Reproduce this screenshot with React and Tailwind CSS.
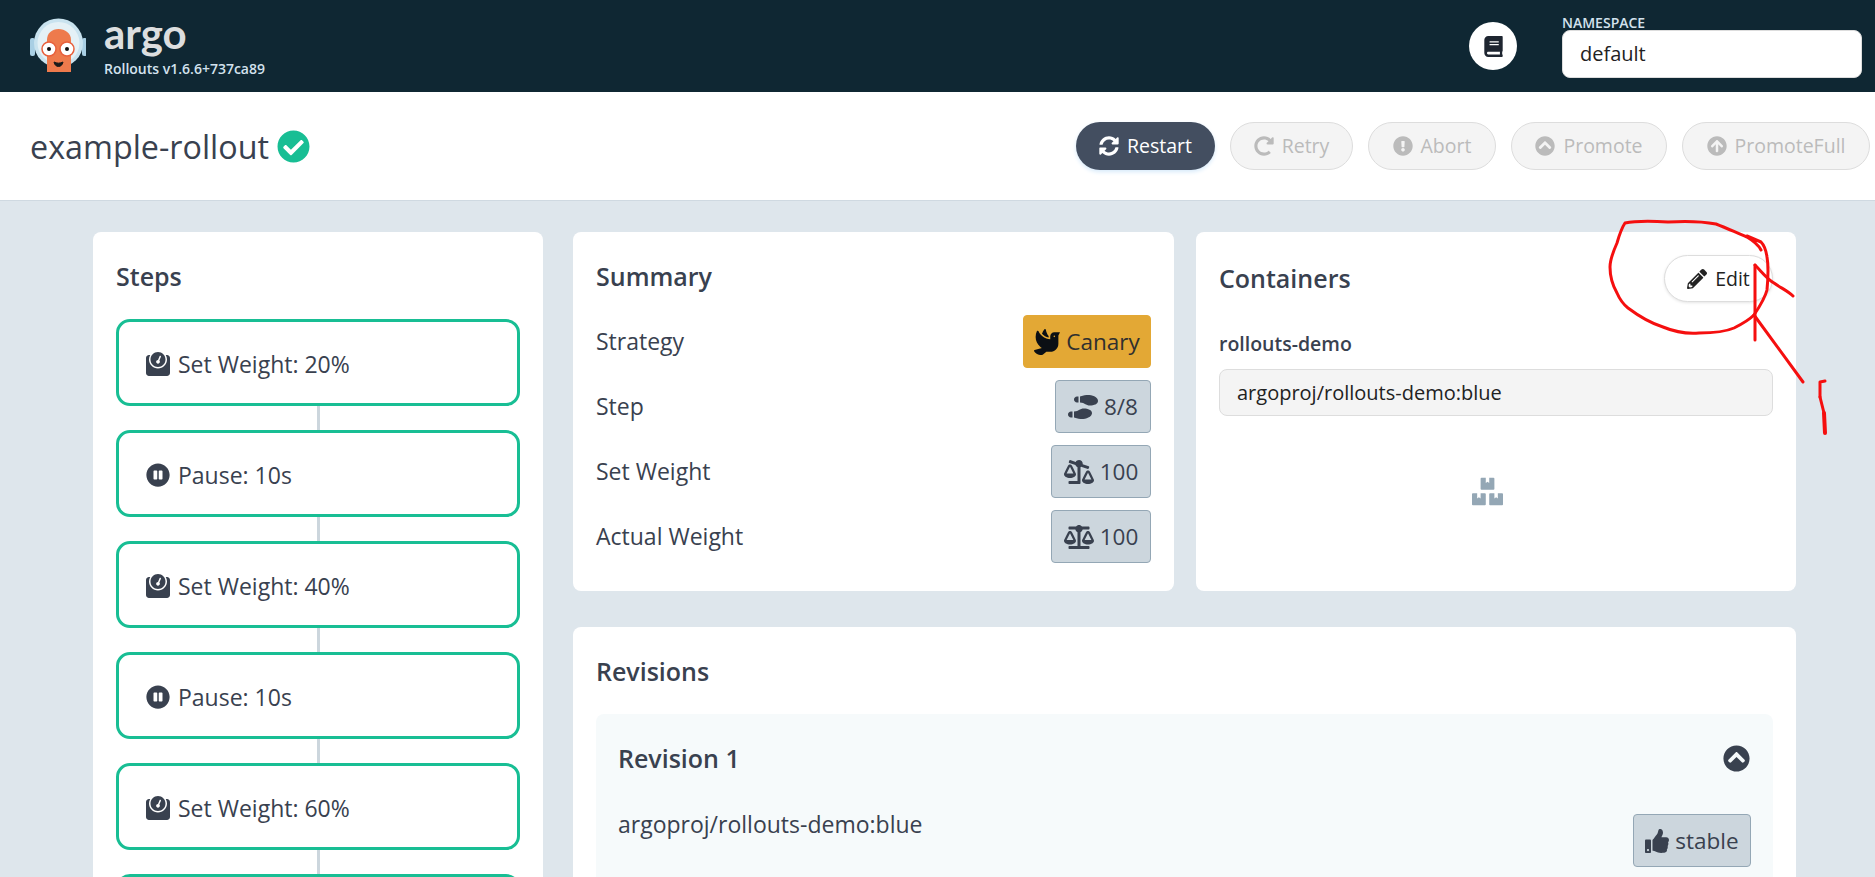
import React from 'react'
import {
  FaBook, FaSyncAlt, FaRedoAlt, FaExclamationCircle, FaChevronCircleUp, FaArrowCircleUp,
  FaCheckCircle, FaPencilAlt, FaDove, FaShoePrints, FaBalanceScale, FaBalanceScaleRight,
  FaWeight, FaPauseCircle, FaThumbsUp, FaBoxes,
} from 'react-icons/fa'

const font = { fontFamily: '"Open Sans", sans-serif' }

const steps = [
  { icon: FaWeight, text: 'Set Weight: 20%' },
  { icon: FaPauseCircle, text: 'Pause: 10s' },
  { icon: FaWeight, text: 'Set Weight: 40%' },
  { icon: FaPauseCircle, text: 'Pause: 10s' },
  { icon: FaWeight, text: 'Set Weight: 60%' },
  {},
]

const disabledActions = [
  { icon: FaRedoAlt, label: 'Retry', w: 'w-[123px]' },
  { icon: FaExclamationCircle, label: 'Abort', w: 'w-[128px]' },
  { icon: FaChevronCircleUp, label: 'Promote', w: 'w-[156px]' },
  { icon: FaArrowCircleUp, label: 'PromoteFull', w: 'w-[188px]' },
]

const summary = [
  { label: 'Strategy', icon: FaDove, value: 'Canary', canary: true, size: 'text-[26px]', w: 'w-[128px]' },
  { label: 'Step', icon: FaShoePrints, value: '8/8', size: 'text-[30px]', w: 'w-[96px]' },
  { label: 'Set Weight', icon: FaBalanceScaleRight, value: '100', size: 'text-[30px]', w: 'w-[100px]' },
  { label: 'Actual Weight', icon: FaBalanceScale, value: '100', size: 'text-[30px]', w: 'w-[100px]' },
]

function Badge({ icon: Icon, children, canary, size, w }) {
  return (
    <div className={`flex h-[53px] items-center justify-center gap-[6px] rounded border text-[22.5px] ${w} ${canary ? 'border-[#e3a835] bg-[#e3a835] text-[#2f2f2f]' : 'border-[#94a7b5] bg-[#ccd6dd] text-[#39414f]'}`}>
      <Icon className={`${size} ${canary ? 'text-[#0b0f14]' : 'text-[#39414f]'}`} />
      <span>{children}</span>
    </div>
  )
}

// red pen marks drawn over the page
function Annotation() {
  return (
    <svg className="pointer-events-none absolute left-0 top-0" width="1875" height="877" fill="none" stroke="#f50f0f" strokeWidth="3" strokeLinecap="round" strokeLinejoin="round">
      <path d="M1761 250 C1758 244 1752 240 1747 237 C1735 232 1726 228 1716 224 C1700 221 1685 221 1668 222 C1650 221 1635 221 1625 223 C1621 229 1619 236 1617 243 C1613 252 1610 259 1610 267 C1610 277 1613 286 1617 293 C1620 300 1623 304 1628 308 C1640 317 1650 323 1663 327 C1675 332 1687 334 1699 333 C1713 333 1725 332 1734 328 C1742 324 1749 320 1754 315 C1760 306 1765 298 1767 290 C1768 279 1769 268 1767 257 C1766 250 1764 245 1761 242 L1747 236" />
      <path d="M1755 265 L1755 340" />
      <path d="M1755 265 C1762 272 1767 279 1774 283 C1781 288 1788 291 1793 296" />
      <path d="M1754 315 L1803 382" />
      <path d="M1825 381 L1820 382 L1820 397" />
      <path d="M1824 413 L1825 433" strokeWidth="4" />
      <path d="M1820 397 L1824 413" />
    </svg>
  )
}

function Logo() {
  return (
    <svg width="56" height="56" viewBox="0 0 56 56" className="shrink-0">
      <rect x="0" y="20" width="5" height="18" rx="2" fill="#a9cfe4" />
      <rect x="52" y="20" width="5" height="18" rx="2" fill="#a9cfe4" />
      <circle cx="28.5" cy="25" r="24.5" fill="#c9e3ef" />
      <circle cx="28.5" cy="25" r="21" fill="#e4f1f6" />
      <path d="M17 54V22c0-7 5-11 11.500-11S41 15 41 22v32z" fill="#ee7a4c" />
      <circle cx="19" cy="31" r="7" fill="#fff" stroke="#e8603c" strokeWidth="1.500" />
      <circle cx="37" cy="31" r="7" fill="#fff" stroke="#e8603c" strokeWidth="1.500" />
      <circle cx="19" cy="31" r="2" fill="#111" />
      <circle cx="37" cy="31" r="2" fill="#111" />
      <path d="M24 44c3 1.500 6 1.500 9 0c-1 6-8 6-9 0z" fill="#1a1a1a" stroke="#1a1a1a" strokeLinejoin="round" />
    </svg>
  )
}

export default function App() {
  return (
    <div className="relative h-[877px] overflow-hidden bg-[#dee6ec] text-[#39414f]" style={font}>
      <header className="flex h-[92px] items-center bg-[#0f2733] pl-[30px] pr-[13px]">
        <Logo />
        <div className="ml-[18px] flex flex-col">
          <span className="h-[45px] text-[42px] font-bold leading-[36px] text-[#dcdedf]" style={{ fontFamily: 'Lato, sans-serif' }}>argo</span>
          <span className="text-[14px] font-semibold leading-[18px] text-[#d3e2ee]">Rollouts v1.6.6+737ca89</span>
        </div>
        <button className="ml-auto flex h-[48px] w-[48px] items-center justify-center rounded-full bg-white text-[#1e2530]">
          <FaBook className="text-[21px]" />
        </button>
        <div className="ml-[45px] flex w-[300px] flex-col">
          <span className="text-[14px] font-semibold leading-[15px] text-[#d3e2ee]">NAMESPACE</span>
          <input readOnly value="default" className="h-[48px] rounded-lg border border-[#dddddd] bg-white px-[17px] text-[20px] text-[#222222] outline-none" />
        </div>
      </header>

      <div className="flex h-[109px] items-center border-b border-[#cfd9e1] bg-white pl-[30px] pr-[5px]">
        <h1 className="text-[32.300px] leading-none text-[#39414f]">example-rollout</h1>
        <FaCheckCircle className="ml-[8px] text-[33px] text-[#18be94]" />
        <div className="ml-auto flex items-center gap-[15px]">
          <button className="flex h-[48px] w-[139px] items-center justify-center gap-[8px] rounded-[24px] bg-[#434e60] text-[19.5px] text-white shadow-[0_2px_4px_#d7eafa]">
            <FaSyncAlt className="text-[20px]" />
            Restart
          </button>
          {disabledActions.map((a) => (
            <button key={a.label} className={`flex h-[48px] items-center justify-center gap-[8px] rounded-[24px] border border-[#dddddd] bg-[#f4f4f4] text-[19.5px] text-[#bbbbbb] ${a.w}`}>
              <a.icon className="text-[20px]" />
              {a.label}
            </button>
          ))}
        </div>
      </div>

      <main className="flex gap-[30px] pl-[93px] pr-[79px] pt-[31px]">
        <section className="h-[900px] w-[450px] shrink-0 rounded-lg bg-white px-[23px] pt-[22px]">
          <h2 className="mb-[21px] text-[25px] font-semibold leading-[44px]">Steps</h2>
          <div className="flex flex-col">
            {steps.map((s, i) => (
              <div key={i} className="flex flex-col items-center">
                <div className="flex h-[87px] w-full items-center gap-[8px] rounded-[14px] border-[3px] border-[#18be94] pl-[27px] pt-[3px] text-[23px]">
                  {s.icon && <s.icon className="text-[24px]" />}
                  {s.text && <span>{s.text}</span>}
                </div>
                <div className="h-[24px] w-[3px] bg-[#ccd6dd]" />
              </div>
            ))}
          </div>
        </section>

        <div className="flex min-w-0 flex-1 flex-col gap-[36px]">
          <div className="flex gap-[22px]">
            <section className="h-[359px] w-[601px] rounded-lg bg-white px-[23px] pt-[22px]">
              <h2 className="mb-[17px] text-[25px] font-semibold leading-[44px]">Summary</h2>
              <div className="flex flex-col gap-[12px]">
                {summary.map((r) => (
                  <div key={r.label} className="flex items-center justify-between">
                    <span className="text-[23px]">{r.label}</span>
                    <Badge icon={r.icon} canary={r.canary} size={r.size} w={r.w}>{r.value}</Badge>
                  </div>
                ))}
              </div>
            </section>

            <section className="flex h-[359px] flex-1 flex-col rounded-lg bg-white px-[23px] pt-[23px]">
              <div className="flex items-center justify-between">
                <h2 className="text-[25px] font-semibold leading-[47px]">Containers</h2>
                <button className="flex h-[47px] w-[109px] items-center justify-center gap-[8px] rounded-[24px] border border-[#dddddd] bg-white text-[19.5px] text-[#222222] shadow-[0_1px_3px_#e5e5e5]">
                  <FaPencilAlt className="text-[20px]" />
                  Edit
                </button>
              </div>
              <div className="mt-[29px] text-[19.5px] font-semibold leading-[26px]">rollouts-demo</div>
              <input readOnly value="argoproj/rollouts-demo:blue" className="mt-[12px] h-[47px] w-full rounded-lg border border-[#dddddd] bg-[#f4f4f4] px-[17px] text-[20px] text-[#222222] outline-none" />
              <FaBoxes className="ml-[253px] mt-[60px] text-[31px] text-[#94a7b5]" />
            </section>
          </div>

          <section className="h-[400px] rounded-lg bg-white px-[23px] pt-[22px]">
            <h2 className="mb-[21px] text-[25px] font-semibold leading-[44px]">Revisions</h2>
            <div className="h-[300px] rounded-lg bg-[#f6fafb] px-[22px] pt-[28px]">
              <div className="flex items-center justify-between">
                <h3 className="text-[25px] font-semibold leading-[32px]">Revision 1</h3>
                <FaChevronCircleUp className="mr-[1px] text-[27px]" />
              </div>
              <div className="mt-[24px] flex items-start justify-between">
                <span className="mt-[10px] text-[23px] leading-[32px]">argoproj/rollouts-demo:blue</span>
                <div className="mt-[16px] flex h-[53px] w-[118px] items-center justify-center gap-[6px] rounded border border-[#94a7b5] bg-[#ccd6dd] text-[22.5px]">
                  <FaThumbsUp className="text-[24px]" />
                  stable
                </div>
              </div>
            </div>
          </section>
        </div>
      </main>

      <Annotation />
    </div>
  )
}
